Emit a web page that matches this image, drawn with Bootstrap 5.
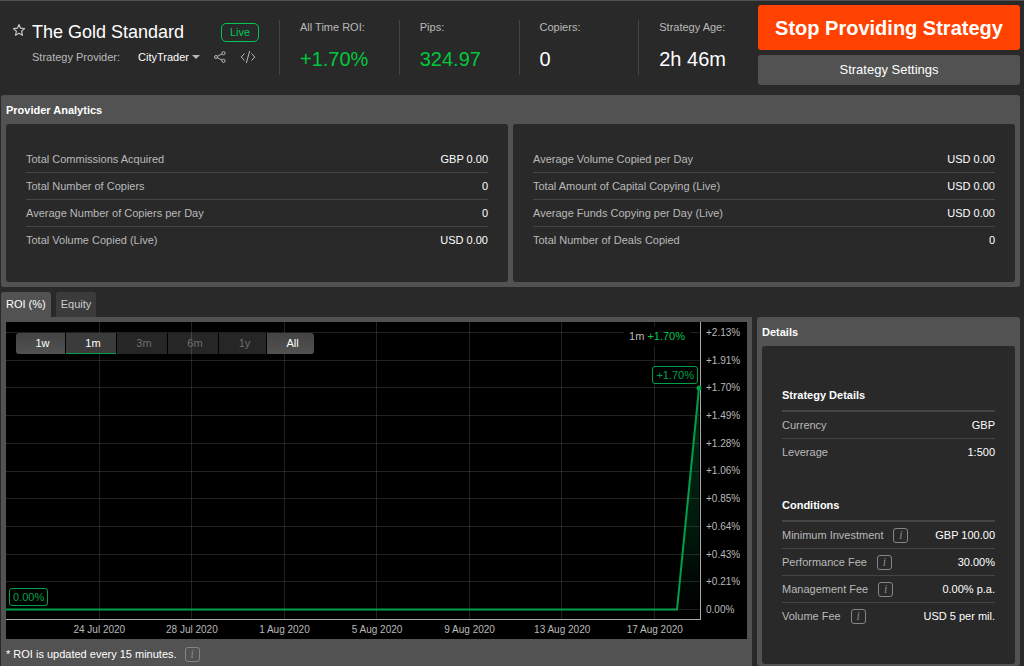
<!DOCTYPE html>
<html lang="en">
<head>
<meta charset="utf-8">
<meta name="viewport" content="width=device-width, initial-scale=1">
<title>The Gold Standard</title>
<link href="https://cdn.jsdelivr.net/npm/bootstrap@5.3.0/dist/css/bootstrap.min.css" rel="stylesheet">
<style>
  :root { --ink: #292929; --panel: #525252; --rule: #454545; --soft: #b9b9b9; --green: #00c83c; --line: #00a04a; }
  body { background: var(--ink); color: #fff; font-family: "Liberation Sans", Arial, sans-serif; font-size: 11px; line-height: 16px; }
  .page { min-height: 100vh; border-top: 1px solid var(--panel); padding: 0 4px 0 1px; }
  button { font-family: inherit; }
  .plain { background: none; border: 0; padding: 0; color: inherit; line-height: 16px; }
  .soft { color: var(--soft); }
  .gain { color: var(--green); }

  .top { display: grid; grid-template-columns: 278px minmax(0, 1fr) 262px; height: 94px; }
  .identity { padding-top: 19px; }
  .title-line { height: 24px; padding-left: 11px; }
  .title-line h1 { font-size: 18px; line-height: 24px; margin: 0 0 0 6px; }
  .live { border: 1px solid #00c853; color: #00c853; border-radius: 5px; background: none; width: 38px; height: 19px; line-height: 16px; padding: 0; margin-right: 20px; }
  .provider-line { padding-left: 31px; margin-top: 5px; }
  .provider-name { margin-left: 18px; gap: 3px; }
  .tool { margin-left: 14px; }
  .stats { padding-top: 19px; }
  .stat { flex: 1 1 0; height: 55px; border-left: 1px solid #444; padding-left: 20px; white-space: nowrap; }
  .stat dd { font-size: 20px; line-height: 24px; margin: 12px 0 0; }
  .stat dt { line-height: 15px; }
  .actions { display: flex; flex-direction: column; gap: 5px; padding-top: 4px; }
  .btn-stop, .btn-config { border: 0; border-radius: 3px; color: #fff; width: 100%; padding: 0; }
  .btn-stop { background: #ff4200; font-size: 20px; font-weight: 700; height: 45px; }
  .btn-config { background: var(--panel); font-size: 13px; height: 30px; }
  .btn-stop:hover, .btn-config:hover { color: #fff; background: #666; }

  .panel { background: var(--panel); border-radius: 3px; padding: 0 5px 5px; }
  .panel-title { font-size: 11px; font-weight: 700; line-height: 31px; height: 29px; margin: 0; }
  .tiles { gap: 5px; }
  .tile { background: var(--ink); border-radius: 3px; padding: 22px 20px 28px; }
  .facts { width: 100%; border-collapse: separate; border-spacing: 0; }
  .facts th, .facts td { height: 27px; padding: 0; border-bottom: 1px solid var(--rule); vertical-align: middle; white-space: nowrap; }
  .facts th { font-weight: 400; color: var(--soft); }
  .facts td { text-align: right; }
  .facts tr:last-child > * { border-bottom-color: transparent; }
  .facts-title { font-size: 11px; font-weight: 700; line-height: 33px; height: 33px; border-bottom: 2px solid var(--rule); margin: 0; }
  .info { width: 15px; height: 15px; border: 1px solid #858585; border-radius: 3px; background: none; padding: 0; color: #8c8c8c; font: italic 12px/12px "Liberation Serif", serif; }
  .term { display: flex; align-items: center; gap: 10px; }

  .lower { display: grid; grid-template-columns: minmax(0, 1fr) 263px; column-gap: 5px; flex: 1; padding-top: 5px; }
  .tab-strip { gap: 5px; height: 25px; }
  .tab-strip button { border: 0; border-radius: 3px 3px 0 0; background: #3b3b3b; color: #ccc; padding: 0 5px; line-height: 25px; }
  .tab-strip button.active { background: var(--panel); color: #fff; }
  .chart-panel { background: var(--panel); padding: 5px 5px 0; }
  .chart { background: #000; display: grid; grid-template-columns: minmax(0, 1fr) 46px; grid-template-rows: minmax(0, 1fr) 19px; color: #b9b9b9; font-size: 10px; line-height: 12px; flex: 1; }
  .plot { border-right: 1px solid #aaa; border-bottom: 1px solid #aaa; min-height: 298px; }
  .plot svg { position: absolute; inset: 0; width: 100%; height: 100%; overflow: visible; }
  .y-axis { padding: 5px 0 4px 5px; }
  .x-axis { padding: 4px 0 0 47px; }
  .x-axis span { flex: 1 1 0; text-align: center; white-space: nowrap; }
  .ranges { position: absolute; left: 10px; top: 11px; gap: 1px; font-size: 11px; }
  .ranges button { width: 50px; height: 21px; border: 0; padding: 0 0 0 4px; color: #fff; font-size: 11px; line-height: 21px; background: linear-gradient(#434343, #525252); }
  .ranges button.brief { width: 47px; }
  .ranges button:disabled { background: rgba(255, 255, 255, .15); color: #6f6f6f; }
  .ranges button.active { background: #3b3b3b; border-bottom: 1px solid var(--line); line-height: 19px; }
  .ranges button:first-child { border-radius: 3px 0 0 3px; width: 49px; }
  .ranges button:last-child { border-radius: 0 3px 3px 0; }
  .period { position: absolute; right: 10px; top: 5px; background: #000; padding: 1px 5px; line-height: 17px; font-size: 11px; }
  .period span { color: #00c853; }
  .flag { position: absolute; border: 1px solid var(--line); border-radius: 3px; color: var(--line); background: #000; padding: 0 3px; font-size: 11px; line-height: 16px; }
  .flag-last { right: 2px; top: 44px; }
  .flag-first { left: 3px; bottom: 13px; }
  .note { height: 27px; padding-top: 3px; }

  .details { margin-top: 25px; padding-bottom: 2px; }
  .details-tile { padding-top: 33px; }
  .second { margin-top: 23px; }
</style>
</head>
<body>
<div class="page d-flex flex-column">
  <header class="top">
    <div class="identity">
      <div class="title-line d-flex align-items-center">
        <svg class="mb-1" width="14" height="14" viewBox="0 0 14 14" fill="none" stroke="#c4c4c4" stroke-width="1.200" stroke-linejoin="round" aria-hidden="true"><path d="M7 1.500 8.600 5.200 12.600 5.600 9.600 8.300 10.500 12.300 7 10.200 3.500 12.300 4.400 8.300 1.400 5.600 5.400 5.200z"/></svg>
        <h1 class="fw-normal">The Gold Standard</h1>
        <button class="live ms-auto" type="button">Live</button>
      </div>
      <div class="provider-line d-flex align-items-center">
        <span class="soft">Strategy Provider:</span>
        <button class="plain provider-name d-flex align-items-center" type="button">CityTrader
          <svg width="8" height="4" viewBox="0 0 8 4" aria-hidden="true"><path d="M0 0h8L4 4z" fill="#b9b9b9"/></svg></button>
        <button class="plain tool d-flex" type="button" aria-label="Share"><svg width="12" height="12" viewBox="0 0 12 12" fill="none" stroke="#b9b9b9"><circle cx="2" cy="6" r="1.500"/><circle cx="9.500" cy="2.200" r="1.600"/><circle cx="9.500" cy="9.800" r="1.600"/><path d="M3.400 5.300 8 2.900M3.400 6.700 8 9.100"/></svg></button>
        <button class="plain tool d-flex" type="button" aria-label="Embed"><svg width="16" height="14" viewBox="0 0 16 14" fill="none" stroke="#b9b9b9"><path d="M4.500 3.500 1.200 7 4.500 10.500M11.500 3.500 14.800 7 11.500 10.500M9.700 1 6.300 13"/></svg></button>
      </div>
    </div>
    <dl class="stats d-flex mb-0">
      <div class="stat"><dt class="fw-normal soft">All Time ROI:</dt><dd class="gain">+1.70%</dd></div>
      <div class="stat"><dt class="fw-normal soft">Pips:</dt><dd class="gain">324.97</dd></div>
      <div class="stat"><dt class="fw-normal soft">Copiers:</dt><dd>0</dd></div>
      <div class="stat"><dt class="fw-normal soft">Strategy Age:</dt><dd>2h 46m</dd></div>
    </dl>
    <div class="actions">
      <button class="btn btn-stop" type="button">Stop Providing Strategy</button>
      <button class="btn btn-config" type="button">Strategy Settings</button>
    </div>
  </header>

  <section class="panel">
    <h2 class="panel-title">Provider Analytics</h2>
    <div class="tiles d-flex">
      <div class="tile flex-fill w-50">
        <table class="facts">
          <tr><th scope="row">Total Commissions Acquired</th><td>GBP 0.00</td></tr>
          <tr><th scope="row">Total Number of Copiers</th><td>0</td></tr>
          <tr><th scope="row">Average Number of Copiers per Day</th><td>0</td></tr>
          <tr><th scope="row">Total Volume Copied (Live)</th><td>USD 0.00</td></tr>
        </table>
      </div>
      <div class="tile flex-fill w-50">
        <table class="facts">
          <tr><th scope="row">Average Volume Copied per Day</th><td>USD 0.00</td></tr>
          <tr><th scope="row">Total Amount of Capital Copying (Live)</th><td>USD 0.00</td></tr>
          <tr><th scope="row">Average Funds Copying per Day (Live)</th><td>USD 0.00</td></tr>
          <tr><th scope="row">Total Number of Deals Copied</th><td>0</td></tr>
        </table>
      </div>
    </div>
  </section>

  <div class="lower">
    <div class="d-flex flex-column">
      <div class="tab-strip d-flex" role="tablist">
        <button class="active" type="button" role="tab" aria-selected="true">ROI (%)</button>
        <button type="button" role="tab" aria-selected="false">Equity</button>
      </div>
      <section class="chart-panel d-flex flex-column flex-fill">
        <div class="chart">
          <div class="plot position-relative">
            <svg viewBox="0 0 694 297" preserveAspectRatio="none" aria-hidden="true">
              <defs><linearGradient id="fade" x1="0" y1="0" x2="0" y2="1"><stop offset="0" stop-color="#00a04a" stop-opacity=".25"/><stop offset=".6" stop-color="#00a04a" stop-opacity=".17"/><stop offset="1" stop-color="#00a04a" stop-opacity="0"/></linearGradient></defs>
              <path stroke="#fff" stroke-opacity=".13" fill="none" vector-effect="non-scaling-stroke" d="M93.500 0V297M185.500 0V297M278.500 0V297M370.500 0V297M463.500 0V297M555.500 0V297M648.500 0V297M0 10.500H694M0 38.500H694M0 65.500H694M0 93.500H694M0 121.500H694M0 149.500H694M0 176.500H694M0 204.500H694M0 232.500H694M0 259.500H694M0 287.500H694"/>
              <path fill="url(#fade)" d="M671 287 693 66V287z"/>
              <path stroke="#00a04a" stroke-width="2" fill="none" vector-effect="non-scaling-stroke" d="M0 287.500H671L693 66"/>
              <circle cx="693" cy="66" r="2.500" fill="#00a04a"/>
            </svg>
            <div class="ranges d-flex">
              <button type="button">1w</button>
              <button class="active" type="button">1m</button>
              <button type="button" disabled>3m</button>
              <button type="button" disabled>6m</button>
              <button class="brief" type="button" disabled>1y</button>
              <button class="brief" type="button">All</button>
            </div>
            <div class="period">1m <span>+1.70%</span></div>
            <div class="flag flag-last">+1.70%</div>
            <div class="flag flag-first">0.00%</div>
          </div>
          <div class="y-axis d-flex flex-column justify-content-between">
            <span>+2.13%</span><span>+1.91%</span><span>+1.70%</span><span>+1.49%</span><span>+1.28%</span><span>+1.06%</span><span>+0.85%</span><span>+0.64%</span><span>+0.43%</span><span>+0.21%</span><span>0.00%</span>
          </div>
          <div class="x-axis d-flex">
            <span>24 Jul 2020</span><span>28 Jul 2020</span><span>1 Aug 2020</span><span>5 Aug 2020</span><span>9 Aug 2020</span><span>13 Aug 2020</span><span>17 Aug 2020</span>
          </div>
        </div>
        <div class="note d-flex align-items-center gap-2">* ROI is updated every 15 minutes. <button class="info" type="button" aria-label="About ROI updates">i</button></div>
      </section>
    </div>

    <section class="panel details d-flex flex-column">
      <h2 class="panel-title">Details</h2>
      <div class="tile details-tile flex-fill">
        <h3 class="facts-title">Strategy Details</h3>
        <table class="facts">
          <tr><th scope="row">Currency</th><td>GBP</td></tr>
          <tr><th scope="row">Leverage</th><td>1:500</td></tr>
        </table>
        <h3 class="facts-title second">Conditions</h3>
        <table class="facts">
          <tr><th scope="row"><span class="term">Minimum Investment <button class="info" type="button" aria-label="About minimum investment">i</button></span></th><td>GBP 100.00</td></tr>
          <tr><th scope="row"><span class="term">Performance Fee <button class="info" type="button" aria-label="About performance fee">i</button></span></th><td>30.00%</td></tr>
          <tr><th scope="row"><span class="term">Management Fee <button class="info" type="button" aria-label="About management fee">i</button></span></th><td>0.00% p.a.</td></tr>
          <tr><th scope="row"><span class="term">Volume Fee <button class="info" type="button" aria-label="About volume fee">i</button></span></th><td>USD 5 per mil.</td></tr>
        </table>
      </div>
    </section>
  </div>
</div>
<script src="https://cdn.jsdelivr.net/npm/bootstrap@5.3.0/dist/js/bootstrap.bundle.min.js"></script>
</body>
</html>
